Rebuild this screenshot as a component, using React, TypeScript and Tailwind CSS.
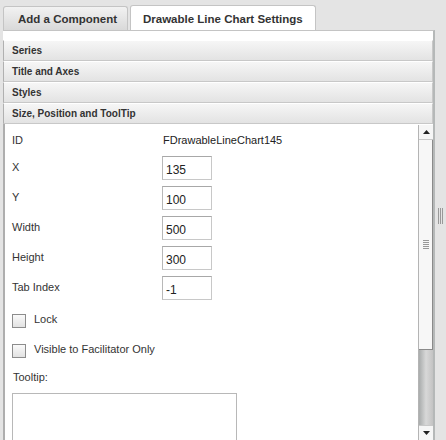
import React from "react";

const sections = ["Series", "Title and Axes", "Styles", "Size, Position and ToolTip"];

const fields = [
  { label: "X", value: "135" },
  { label: "Y", value: "100" },
  { label: "Width", value: "500" },
  { label: "Height", value: "300" },
  { label: "Tab Index", value: "-1" },
];

const App = () => {
  return (
    <div
      className="w-[446px] h-[440px] overflow-hidden bg-[#e4e4e4] flex text-[#333]"
      style={{ fontFamily: '"Liberation Sans", Arial, sans-serif' }}
    >
      <div className="w-[435px] flex flex-col pl-[3px]">
        {/* tabs */}
        <div className="flex items-end h-[30px] shrink-0 gap-[2px]">
          <div className="w-[125px] h-[24px] border border-b-0 border-[#c4c4c4] rounded-t-[3px] bg-gradient-to-b from-[#f2f2f2] to-[#d9d9d9] text-[11.5px] font-bold text-[#333] pl-[14px] pt-[4px]">
            Add a Component
          </div>
          <div className="w-[186px] h-[25px] border border-b-0 border-[#c4c4c4] rounded-t-[3px] bg-white text-[11.5px] font-bold text-[#333] pl-[12px] pt-[5px]">
            Drawable Line Chart Settings
          </div>
        </div>
        {/* panel */}
        <div className="flex-1 min-h-0 overflow-hidden bg-white border-r-[2px] border-[#b5b8b8] border-t border-t-[#c4c4c4] flex flex-col pt-[9px]">
          {sections.map((s) => (
            <div
              key={s}
              className="h-[21px] shrink-0 border border-[#c8c8c8] border-t-white border-l-[#b0b0b0] bg-gradient-to-b from-[#f6f6f6] to-[#e3e3e3] text-[10px] font-bold text-[#333] pl-[8px] leading-[19px]"
            >
              {s}
            </div>
          ))}
          <div className="flex-1 min-h-0 flex border-l-[2px] border-[#aeaeae]">
            <div className="flex-1 overflow-hidden flex flex-col pl-[7px] text-[11px] text-[#333]">
              <div className="flex h-[30px] shrink-0 items-center pt-[3px]">
                <div className="w-[151px]">ID</div>
                <div className="text-[#222]">FDrawableLineChart145</div>
              </div>
              {fields.map((f) => (
                <div key={f.label} className="flex h-[30px] shrink-0 pt-[2px]">
                  <div className="w-[150px] pt-[3px]">{f.label}</div>
                  <div className="w-[50px] h-[24px] border border-[#c8c8c8] border-t-[#a8a8a8] border-l-[#b8b8b8] pl-[3px] pt-[4px] text-[12px] text-[#222]">
                    {f.value}
                  </div>
                </div>
              ))}
              <div className="flex shrink-0 items-center h-[30px] pt-[3px]">
                <div className="w-[14px] h-[14px] border border-[#8c8c8c] bg-gradient-to-b from-[#fafafa] to-[#e2e2e2] mr-[8px]" />
                <span className="-mt-[2px]">Lock</span>
              </div>
              <div className="flex shrink-0 items-center h-[30px] pt-[3px]">
                <div className="w-[14px] h-[14px] border border-[#8c8c8c] bg-gradient-to-b from-[#fafafa] to-[#e2e2e2] mr-[8px]" />
                <span className="-mt-[2px]">Visible to Facilitator Only</span>
              </div>
              <div className="h-[29px] shrink-0 pt-[5px] pl-[1px]">Tooltip:</div>
              <div className="w-[225px] h-[60px] shrink-0 border border-[#b8b8b8]" />
            </div>
            {/* inner scrollbar */}
            <div className="w-[15px] shrink-0 flex flex-col border-l border-[#b4b4b4] mt-[1px]">
              <div className="h-[15px] shrink-0 flex items-center justify-center border-b border-[#c8c8c8] bg-[#f6f6f6]">
                <svg width="7" height="4" viewBox="0 0 7 4">
                  <path d="M3.5 0 L7 4 L0 4 Z" fill="#222" />
                </svg>
              </div>
              <div className="h-[210px] shrink-0 bg-[#f7f7f7] border-r border-b border-[#8a8a8a] flex items-center justify-center">
                <svg width="6" height="9" viewBox="0 0 6 9">
                  {[0, 2, 4, 6, 8].map((y) => (
                    <rect key={y} x="0" y={y} width="6" height="1" fill="#999" />
                  ))}
                </svg>
              </div>
              <div className="flex-1 bg-gradient-to-r from-[#a9acac] via-[#d8d8d8] to-[#c3c3c3]" />
              <div className="h-[15px] shrink-0 flex items-center justify-center border-t border-[#c8c8c8] bg-[#f6f6f6]">
                <svg width="7" height="4" viewBox="0 0 7 4">
                  <path d="M0 0 L7 0 L3.5 4 Z" fill="#222" />
                </svg>
              </div>
            </div>
          </div>
        </div>
      </div>
      {/* outer gutter with grip */}
      <div className="flex-1 flex items-center justify-center pb-[8px]">
        <svg width="6" height="16" viewBox="0 0 6 16">
          <rect x="0" y="0" width="1" height="16" fill="#999" />
          <rect x="2" y="0" width="1" height="16" fill="#999" />
          <rect x="4" y="0" width="1" height="16" fill="#999" />
        </svg>
      </div>
    </div>
  );
};

export default App;
